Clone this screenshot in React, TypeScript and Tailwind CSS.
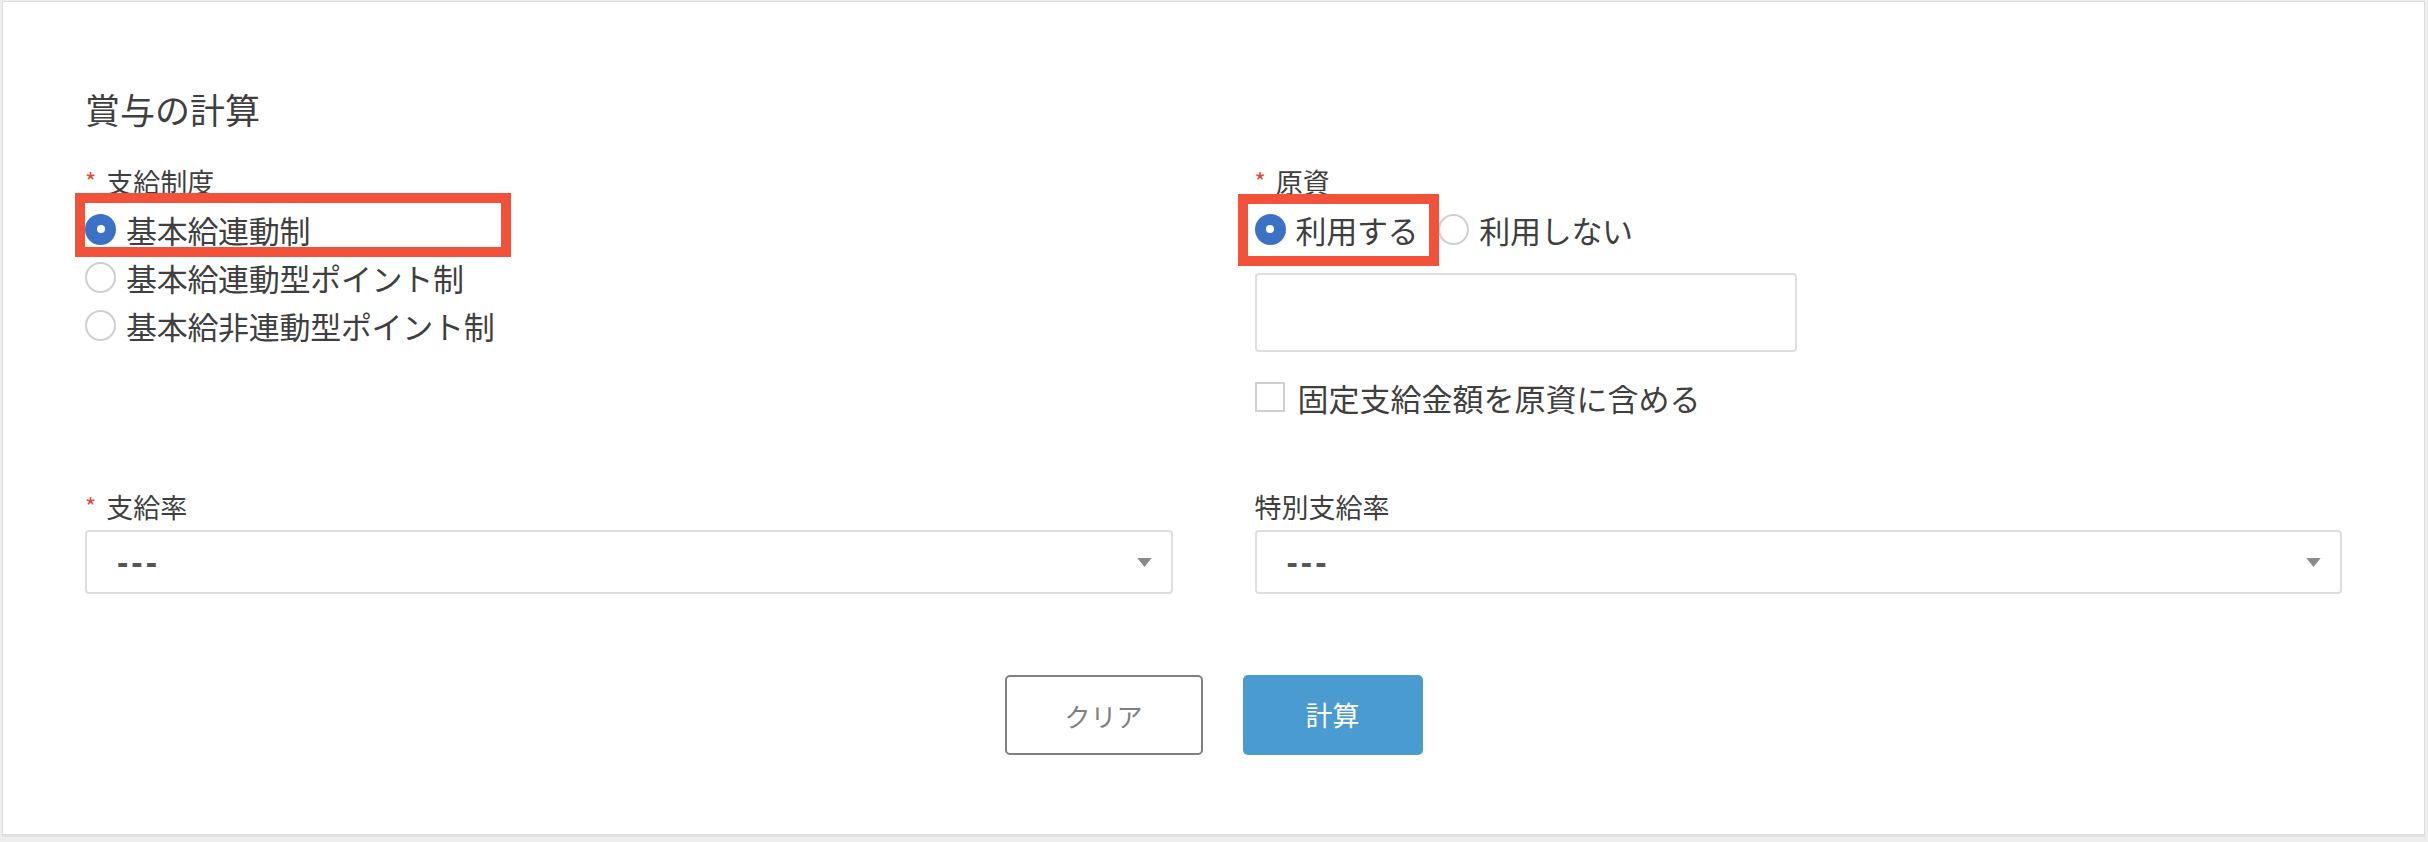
import type { ReactNode } from 'react';

const FONT = "font-['Noto_Sans_CJK_JP','Noto_Sans',sans-serif]";

function Radio({ checked }: { checked?: boolean }) {
  if (checked) {
    return (
      <span className="size-[31px] shrink-0 rounded-full bg-[#3b72c6] grid place-items-center">
        <span className="size-[8px] rounded-full bg-white" />
      </span>
    );
  }
  return <span className="size-[31px] shrink-0 rounded-full border-2 border-[#cfcfcf] bg-white" />;
}

function Option({ label, checked }: { label: string; checked?: boolean }) {
  return (
    <label className="h-[48px] flex items-center gap-[10px] text-[31px] text-[#3f3f3f]">
      <Radio checked={checked} />
      <span className="leading-none tracking-[-0.3px]">{label}</span>
    </label>
  );
}

function FieldLabel({ children, required }: { children: ReactNode; required?: boolean }) {
  return (
    <div className="h-[36px] flex items-center text-[27px] leading-[36px] text-[#3f3f3f]">
      {required && <span className="text-[#e0463a] text-[24px] mr-[10px] -mt-[3px]">*</span>}
      {children}
    </div>
  );
}

function Highlight({ className }: { className: string }) {
  return <div className={'absolute border-[10px] border-[#f15239] pointer-events-none ' + className} />;
}

function Select() {
  return (
    <div className="mt-[5px] h-[64px] rounded-[4px] border-2 border-[#dedede] bg-white flex items-center pl-[30px] pr-[19px]">
      <span className="flex-1 text-[34px] leading-none font-bold text-[#555] tracking-[3px] font-['Liberation_Sans',sans-serif]">---</span>
      <svg viewBox="0 0 16 10" className="w-[15px] h-[9px]">
        <path d="M0 0 H16 L8 10 Z" fill="#8a8a8a" />
      </svg>
    </div>
  );
}

export default function App() {
  return (
    <div className={'h-[842px] bg-[#eeeeee] pl-[2px] pr-[3px] pt-px ' + FONT}>
      <div className="h-[834px] bg-white border border-[#dcdcdc] shadow-[0_2px_0_#e2e2e2] px-[82px] pt-[83px]">
        <h2 className="text-[35px] leading-[48px] text-[#3f3f3f] font-normal">賞与の計算</h2>

        <div className="mt-[31px] grid grid-cols-2 gap-x-[82px]">
          <div>
            <FieldLabel required>支給制度</FieldLabel>
            <div className="mt-[5px] flex flex-col">
              <div className="relative">
                <Option label="基本給連動制" checked />
                <Highlight className="-left-[10px] -top-[12px] w-[436px] h-[64px]" />
              </div>
              <Option label="基本給連動型ポイント制" />
              <Option label="基本給非連動型ポイント制" />
            </div>
          </div>

          <div>
            <FieldLabel required>原資</FieldLabel>
            <div className="mt-[5px] flex items-center gap-[20px]">
              <div className="relative">
                <Option label="利用する" checked />
                <Highlight className="-left-[17px] -top-[11px] w-[201px] h-[72px]" />
              </div>
              <Option label="利用しない" />
            </div>
            <div className="mt-[20px] w-[542px] h-[79px] rounded-[4px] border-2 border-[#dedede] bg-white" />
            <label className="mt-[21px] h-[48px] flex items-center gap-[13px] text-[31px] text-[#3f3f3f]">
              <span className="size-[30px] shrink-0 border-2 border-[#cfcfcf] bg-white" />
              <span className="leading-none">固定支給金額を原資に含める</span>
            </label>
          </div>
        </div>

        <div className="mt-[68px] grid grid-cols-2 gap-x-[82px]">
          <div>
            <FieldLabel required>支給率</FieldLabel>
            <Select />
          </div>
          <div>
            <FieldLabel>特別支給率</FieldLabel>
            <Select />
          </div>
        </div>

        <div className="mt-[81px] flex justify-center gap-[40px]">
          <button
            type="button"
            className="w-[198px] h-[80px] rounded-[5px] border-2 border-[#808080] bg-white text-[26px] text-[#808080]"
          >
            クリア
          </button>
          <button
            type="button"
            className="w-[180px] h-[80px] rounded-[5px] bg-[#4a9bcf] text-[27px] text-white"
          >
            計算
          </button>
        </div>
      </div>
    </div>
  );
}
